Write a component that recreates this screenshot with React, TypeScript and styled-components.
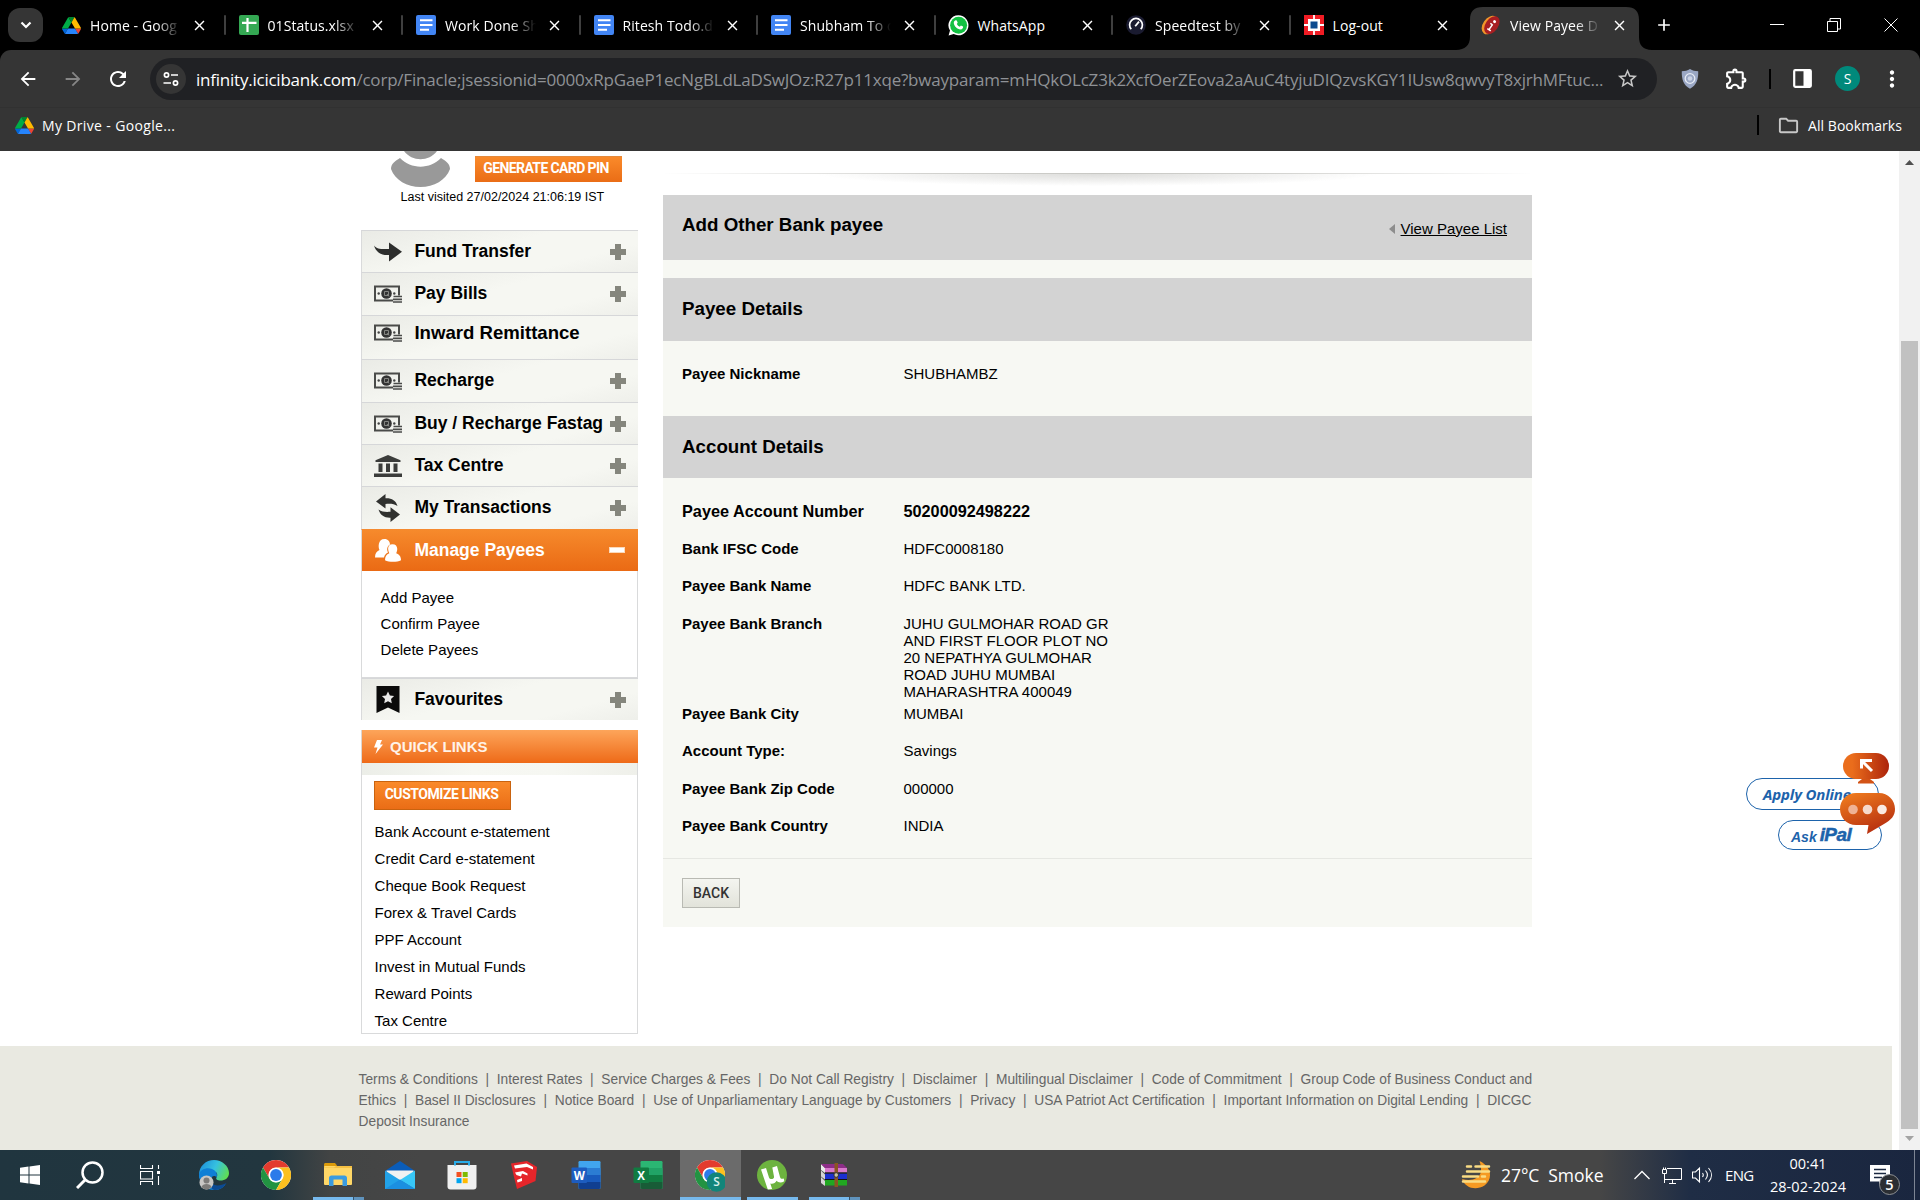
import React from 'react';
import styled, { createGlobalStyle, css } from 'styled-components';
import {
  MdArrowBack,
  MdArrowForward,
  MdRefresh,
  MdStarBorder,
  MdOutlineExtension,
  MdMoreVert,
  MdOutlineFolder,
  MdClose,
  MdAdd,
} from 'react-icons/md';

const uiFont = `"Open Sans", "Noto Sans", sans-serif`;
const pageFont = `"Liberation Sans", Arial, sans-serif`;

const GlobalStyle = createGlobalStyle`
  *, *::before, *::after { box-sizing: border-box; }
  body { margin: 0; background: #000; overflow: hidden; }
  svg { display: block; flex: none; }
`;

const Screen = styled.div`
  width: 1920px;
  height: 1200px;
  display: flex;
  flex-direction: column;
  overflow: hidden;
`;

const Spacer = styled.div<{ $width: number }>`
  width: ${(p) => p.$width}px;
  flex: none;
`;

/* ---------- browser tabs ---------- */

const TabStrip = styled.div`
  height: 50px;
  flex: none;
  display: flex;
  align-items: center;
  background: #000;
  font-family: ${uiFont};
  padding-left: 8px;
`;

const TabSearch = styled.div`
  width: 35px;
  height: 34px;
  border-radius: 12px;
  background: #353535;
  margin-right: 4px;
  display: flex;
  align-items: center;
  justify-content: center;
`;

const Tab = styled.div<{ $line?: boolean }>`
  position: relative;
  width: 177.5px;
  height: 50px;
  flex: none;
  display: flex;
  align-items: center;
  padding-left: 14px;
  color: #fff;
  ${(p) =>
    p.$line &&
    css`
      &::after {
        content: '';
        position: absolute;
        right: -1px;
        top: 15px;
        width: 2px;
        height: 20px;
        border-radius: 1px;
        background: #3f3f3f;
      }
    `}
`;

const ActiveShape = styled.svg`
  position: absolute;
  left: -11px;
  top: 7px;
`;

const Favicon = styled.div`
  position: relative;
  width: 20px;
  height: 20px;
  margin-right: 9px;
  display: flex;
  align-items: center;
  justify-content: center;
`;

const TabTitle = styled.div<{ $fade?: boolean }>`
  position: relative;
  width: 91px;
  font-size: 14px;
  line-height: 20px;
  padding-top: 1px;
  white-space: nowrap;
  letter-spacing: 0.08px;
  ${(p) =>
    p.$fade &&
    css`
      mask-image: linear-gradient(90deg, #000 66px, transparent 91px);
    `}
`;

const TabClose = styled.div`
  position: relative;
  margin-left: 10px;
  display: flex;
`;

const WindowControls = styled.div`
  margin-left: auto;
  margin-right: 22px;
  display: flex;
  gap: 43px;
`;

const NewTab = styled.div`
  width: 38px;
  display: flex;
  justify-content: center;
`;

/* ---------- toolbar ---------- */

const Toolbar = styled.div`
  height: 101px;
  flex: none;
  background: #353535;
  border-radius: 11px 11px 0 0;
  color: #fff;
  font-family: ${uiFont};
  display: flex;
  flex-direction: column;
`;

const NavRow = styled.div`
  height: 58px;
  display: flex;
  align-items: center;
  border-bottom: 1px solid #313131;
`;

const NavButton = styled.div<{ $dim?: boolean }>`
  width: 45px;
  display: flex;
  justify-content: center;
  color: ${(p) => (p.$dim ? '#868686' : '#fff')};
`;

const NavButtons = styled.div`
  display: flex;
  align-items: center;
  width: 150px;
  padding-left: 5px;
`;

const UrlBar = styled.div`
  width: 1507px;
  height: 42px;
  border-radius: 21px;
  background: #202124;
  display: flex;
  align-items: center;
  padding: 0 17px 0 6px;
`;

const SiteInfo = styled.div`
  width: 30px;
  height: 30px;
  border-radius: 50%;
  background: #353535;
  display: flex;
  align-items: center;
  justify-content: center;
  margin-right: 10px;
`;

const Url = styled.div`
  width: 1420px;
  white-space: nowrap;
  font-size: 17px;
  letter-spacing: -0.2px;
  padding-top: 2px;
  color: #8f9296;
`;

const Domain = styled.span`
  color: #fff;
  letter-spacing: -0.23px;
`;

const ToolIcons = styled.div`
  flex: 1;
  display: flex;
  align-items: center;
  padding-left: 24px;
`;

const Rule = styled.div<{ $height: number }>`
  width: 2px;
  height: ${(p) => p.$height}px;
  background: #000;
`;

const Profile = styled.div`
  width: 25px;
  height: 25px;
  border-radius: 50%;
  background: #00897b;
  font-size: 14px;
  line-height: 25px;
  text-align: center;
`;

const BookmarkRow = styled.div`
  flex: 1;
  display: flex;
  align-items: center;
  justify-content: space-between;
  padding: 0 18px 9px 15px;
  font-size: 14px;
`;

const Bookmark = styled.div<{ $spacing: number }>`
  display: flex;
  align-items: center;
  gap: 8px;
  letter-spacing: ${(p) => p.$spacing}px;
`;

/* ---------- page ---------- */

const Viewport = styled.div`
  height: 999px;
  flex: none;
  display: flex;
  background: #fff;
  font-family: ${pageFont};
  color: #000;
`;

const Page = styled.div`
  position: relative;
  width: 1899px;
  display: flex;
  flex-direction: column;
`;

const Body = styled.div`
  height: 895px;
  display: flex;
  padding-left: 361px;
`;

const Sidebar = styled.div`
  width: 277px;
  margin-right: 25px;
`;

const Visitor = styled.div`
  height: 79px;
  display: grid;
  grid-template-columns: 114px 147px;
  grid-template-rows: 37px 18px;
`;

const AvatarBox = styled.div`
  padding-left: 30px;
`;

const ButtonSlot = styled.div`
  padding-top: 5px;
`;

const OrangeButton = styled.div<{ $bordered?: boolean; $width: number; $height: number }>`
  width: ${(p) => p.$width}px;
  height: ${(p) => p.$height}px;
  display: flex;
  align-items: center;
  justify-content: center;
  background: linear-gradient(#fa8a2a, #ea6d16);
  border: ${(p) => (p.$bordered ? '1px solid #c9630f' : '0')};
  border-top: 1px solid ${(p) => (p.$bordered ? '#c9630f' : '#e58a3c')};
  padding: 0 ${(p) => (p.$bordered ? 2 : 5)}px 3px 0;
  color: #fff;
  font: 700 14px Roboto, sans-serif;
  letter-spacing: ${(p) => (p.$bordered ? -0.45 : -0.62)}px;
  white-space: nowrap;
`;

const LastVisit = styled.div`
  grid-column: 1 / 3;
  padding-left: 39.6px;
  font-size: 12.5px;
  line-height: 19px;
`;

const MenuRow = styled.div<{ $height: number; $lift?: number; $active?: boolean }>`
  height: ${(p) => p.$height}px;
  display: flex;
  align-items: center;
  padding: 0 12px ${(p) => p.$lift ?? 0}px 12px;
  border-left: 1px solid #d9dadb;
  border-top: 1px solid #d6d7d9;
  background: linear-gradient(165deg, #eaebe6 0%, #f6f7f2 45%, #f6f7f2 75%, #eeefea 100%);
  font-weight: 700;
  font-size: 17.5px;
  white-space: nowrap;
  ${(p) =>
    p.$active &&
    css`
      color: #fff;
      border-top-color: #f58a30;
      background: linear-gradient(#f68a2c, #ea6a14);
    `}
`;

const MenuIcon = styled.div`
  width: 28px;
  margin-right: 12.4px;
  display: flex;
  justify-content: center;
`;

const MenuLabel = styled.div<{ $size?: number }>`
  flex: 1;
  font-size: ${(p) => p.$size ?? 17.5}px;
`;

const Plus = styled.div`
  width: 16px;
  height: 16px;
  margin-top: 1px;
  background: linear-gradient(#85867d, #85867d) center / 16px 6px no-repeat,
    linear-gradient(#85867d, #85867d) center / 6px 16px no-repeat;
`;

const Minus = styled.div`
  width: 16px;
  height: 6px;
  margin-right: 1px;
  background: #fff;
  border: 1px solid #fbd9bb;
`;

const SubMenu = styled.div`
  height: 107px;
  border: 1px solid #d9dadb;
  border-top: 0;
  padding: 14px 0 0 18.6px;
  font-size: 15px;
  line-height: 26px;
`;

const QuickHead = styled.div`
  margin-top: 10px;
  height: 33px;
  border-left: 1px solid #dcd6d1;
  display: flex;
  align-items: center;
  gap: 7px;
  padding-left: 12px;
  background: linear-gradient(#fda55a, #ee6a18);
  color: #fff3e8;
  font-weight: 700;
  font-size: 15px;
`;

const QuickBox = styled.div`
  height: 271px;
  border: 1px solid #d9dadb;
  border-top: 0;
`;

const QuickBand = styled.div`
  height: 12px;
  background: linear-gradient(90deg, #eceee8, #f7f8f3 40%, #f6f7f2 70%, #eff0ea);
  margin-bottom: 6px;
`;

const QuickList = styled.div`
  padding-left: 12px;
`;

const QuickLinks = styled.div`
  margin-top: 8px;
  padding-left: 0.6px;
`;

const QuickLink = styled.div`
  font-size: 15px;
  line-height: 27px;
  white-space: nowrap;
`;

/* ---------- main panel ---------- */

const Main = styled.div`
  width: 869px;
`;

const HeaderShade = styled.div`
  margin-top: 22px;
  height: 22px;
  border-top: 1px solid transparent;
  border-image: linear-gradient(90deg, #fff, #d2d2cf 30%, #c8c8c4 50%, #d2d2cf 70%, #fff) 1;
  background: radial-gradient(ellipse 280px 12px at 50% 0, #dddddb, transparent);
`;

const TitleBar = styled.div<{ $height: number; $gap?: number }>`
  height: ${(p) => p.$height}px;
  margin-bottom: ${(p) => p.$gap ?? 0}px;
  background: #d3d3d3;
  display: flex;
  align-items: center;
  justify-content: space-between;
  padding: 0 25px 0 19px;
`;

const Heading = styled.div<{ $raise?: number }>`
  font-weight: 700;
  font-size: 18.75px;
  line-height: 22px;
  padding-bottom: ${(p) => p.$raise ?? 0}px;
`;

const BackLink = styled.div`
  display: flex;
  align-items: center;
  gap: 6px;
  font-size: 15px;
  line-height: 18px;
  padding-top: 2px;
  span {
    text-decoration: underline;
  }
`;

const Sheet = styled.div`
  background: #f7f8f3;
`;

const Fields = styled.div<{ $height: number; $top: number }>`
  height: ${(p) => p.$height}px;
  padding: ${(p) => p.$top}px 0 0 19px;
`;

const Field = styled.div<{ $height: number; $large?: boolean }>`
  height: ${(p) => p.$height}px;
  display: grid;
  grid-template-columns: 221.5px 220px;
  align-items: start;
  font-size: ${(p) => (p.$large ? 16.25 : 15)}px;
  font-weight: ${(p) => (p.$large ? 700 : 400)};
  line-height: 17px;
`;

const Label = styled.div`
  font-weight: 700;
  white-space: nowrap;
`;

const Value = styled.div`
  white-space: pre-line;
`;

const Actions = styled.div`
  height: 69px;
  border-top: 1px solid #e6e7e2;
  padding: 19px;
`;

const BackButton = styled.div`
  width: 58px;
  height: 30px;
  border: 1px solid #b9bab3;
  background: linear-gradient(#f4f5f0, #e2e3da);
  display: flex;
  align-items: center;
  justify-content: center;
  padding-bottom: 1px;
  font: 500 14px Roboto, sans-serif;
  letter-spacing: 0;
  color: #333;
`;

/* ---------- page footer, scrollbar, helper ---------- */

const Footer = styled.div`
  height: 104px;
  width: 1892px;
  background: #e9e9e1;
  padding: 23px 0 0 358.6px;
  font-size: 13.75px;
  line-height: 21px;
  color: #666;
`;

const FooterLine = styled.div`
  display: flex;
  white-space: nowrap;
`;

const FooterItem = styled.span`
  & + &::before {
    content: '|';
    margin: 0 7.7px;
  }
`;

const Scrollbar = styled.div`
  width: 21px;
  background: #f1f1f1;
  display: flex;
  flex-direction: column;
  align-items: center;
  padding: 9px 0;
`;

const Thumb = styled.div`
  width: 17px;
  height: 788px;
  margin: 176px 0 auto;
  background: #c1c1c1;
`;

const Helper = styled.div`
  position: absolute;
  left: 1746px;
  top: 602px;
  width: 150px;
  height: 98px;
`;

const Pill = styled.div<{ $left: number; $top: number; $width: number; $height: number }>`
  position: absolute;
  left: ${(p) => p.$left}px;
  top: ${(p) => p.$top}px;
  width: ${(p) => p.$width}px;
  height: ${(p) => p.$height}px;
  border: 1px solid #1d63ab;
  border-radius: 16px;
  background: #fff;
  color: #1d63ab;
  white-space: nowrap;
`;

const ApplyText = styled.div`
  padding: 1px 0 0 16px;
  font: italic 700 15px/28px "Open Sans", sans-serif;
  letter-spacing: -0.15px;
`;

const AskText = styled.div`
  padding-left: 12px;
  display: flex;
  gap: 3px;
  font: italic 700 14px/32px "Liberation Sans", sans-serif;
  b {
    font-size: 19px;
    line-height: 28px;
    letter-spacing: -0.6px;
    -webkit-text-stroke: 0.5px #1d63ab;
  }
`;

const HelperArt = styled.svg`
  position: absolute;
  left: 94px;
  top: 0;
`;

/* ---------- taskbar ---------- */

const Taskbar = styled.div`
  height: 50px;
  flex: none;
  display: flex;
  background: linear-gradient(90deg, #20353f 0, #22363f 270px, #424444 330px, #464646 420px, #464646 1600px, #1f2d45 1690px, #1a263f 1920px);
  color: #fff;
  font-family: ${uiFont};
`;

const SystemCell = styled.div`
  width: 60px;
  display: flex;
  align-items: center;
  justify-content: center;
`;

const Apps = styled.div`
  display: flex;
  padding-left: 3px;
  flex: 1;
`;

const AppCell = styled.div<{ $active?: boolean }>`
  position: relative;
  width: 62px;
  display: flex;
  align-items: center;
  justify-content: center;
  background: ${(p) => (p.$active ? 'linear-gradient(90deg, transparent 1px, #6b6b6b 1px)' : 'none')};
`;

const Underline = styled.div<{ $kind: 'one' | 'stack' | 'full' }>`
  position: absolute;
  bottom: 0;
  height: 3px;
  left: ${(p) => (p.$kind === 'full' ? 1 : 6)}px;
  right: ${(p) => (p.$kind === 'full' ? 0 : 5)}px;
  background: ${(p) =>
    p.$kind === 'stack'
      ? 'linear-gradient(90deg, #76b9ed 40px, #35536b 40px, #35536b 41px, #5f93bd 41px)'
      : '#76b9ed'};
`;

const Tray = styled.div`
  width: 459px;
  display: flex;
  align-items: center;
`;

const Weather = styled.div`
  width: 173px;
  display: flex;
  align-items: center;
  gap: 10px;
  font-size: 17.5px;
  letter-spacing: -0.05px;
  white-space: pre;
`;

const Language = styled.div`
  font-size: 15px;
  letter-spacing: -0.7px;
  margin-left: 12px;
  width: 40px;
`;

const Clock = styled.div`
  width: 86px;
  text-align: center;
  font-size: 14.5px;
  line-height: 23px;
  letter-spacing: 0.05px;
  padding-bottom: 1px;
`;

const Notice = styled.div`
  position: relative;
  margin-left: 19px;
  width: 45px;
  height: 50px;
  border-right: 1px solid #7d8594;
`;

const NoticeIcon = styled.svg`
  margin-top: 15px;
`;

const NoticeCount = styled.div`
  position: absolute;
  left: 9px;
  top: 24px;
  width: 21px;
  height: 21px;
  border-radius: 50%;
  border: 1px solid #8c8f93;
  background: #2b2e33;
  font-size: 14.5px;
  font-weight: 600;
  line-height: 19px;
  text-align: center;
`;

/* ---------- drawings ---------- */

const DriveLogo = () => (
  <svg width="19" height="17" viewBox="0 0 87.3 78">
    <path fill="#0066da" d="m6.6 66.85 3.85 6.65c.8 1.4 1.95 2.5 3.3 3.3l13.75-23.8h-27.5c0 1.55.4 3.1 1.2 4.5z" />
    <path fill="#00ac47" d="m43.65 25-13.75-23.8c-1.35.8-2.5 1.9-3.3 3.3l-25.4 44a9.06 9.06 0 0 0-1.2 4.5h27.5z" />
    <path fill="#ea4335" d="m73.55 76.8c1.35-.8 2.5-1.9 3.3-3.3l9.25-16c.8-1.4 1.2-2.95 1.2-4.5h-27.5l5.85 11.5z" />
    <path fill="#00832d" d="m43.65 25 13.75-23.8c-1.35-.8-2.9-1.2-4.5-1.2h-18.5c-1.6 0-3.15.45-4.5 1.2z" />
    <path fill="#2684fc" d="m59.8 53h-32.3l-13.75 23.8c1.35.8 2.9 1.2 4.5 1.2h50.8c1.6 0 3.15-.45 4.5-1.2z" />
    <path fill="#ffba00" d="m73.4 26.5-12.7-22c-.8-1.4-1.95-2.5-3.3-3.3l-13.75 23.8 16.15 28h27.45c0-1.55-.4-3.1-1.2-4.5z" />
  </svg>
);

const SheetIcon = () => (
  <svg width="20" height="20" viewBox="0 0 20 20">
    <rect width="20" height="20" rx="2" fill="#34a853" />
    <path d="M8.500 3v14M3 7.800h14.500" stroke="#fff" strokeWidth="2.200" />
  </svg>
);

const DocIcon = () => (
  <svg width="20" height="20" viewBox="0 0 20 20">
    <rect width="20" height="20" rx="2" fill="#4285f4" />
    <path d="M4 5.200h12.500M4 10h12.500M4 14.800h9" stroke="#fff" strokeWidth="2" />
  </svg>
);

const WhatsAppIcon = () => (
  <svg width="21" height="21" viewBox="0 0 21 21">
    <path d="M10.500.3a10 10 0 1 1-4.800 18.800L.6 20.500 2 15.600A10 10 0 0 1 10.500.3z" fill="#fff" />
    <circle cx="10.600" cy="10.300" r="8.500" fill="#12c142" />
    <path d="M7.500 5.300l1.300.2.9 2.200-.9 1.200c.7 1.300 1.700 2.200 3 2.800l1.100-1.200 2.200 1c.2 1.800-1 3-2.500 2.900-3.500-.3-6.500-3.300-6.800-6.500 0-1.100.7-2.200 1.700-2.600z" fill="#fff" />
  </svg>
);

const SpeedIcon = () => (
  <svg width="20" height="20" viewBox="0 0 20 20">
    <circle cx="10" cy="10" r="9.800" fill="#1a1b30" />
    <path d="M5.300 14.200a6.400 6.400 0 1 1 9.400 0" fill="none" stroke="#fff" strokeWidth="1.700" />
    <path d="M9.200 11.200L13 6.600" stroke="#fff" strokeWidth="1.800" />
  </svg>
);

const HdfcIcon = () => (
  <svg width="20" height="20" viewBox="0 0 20 20">
    <rect width="20" height="20" fill="#f01c24" />
    <path d="M10 0v20M0 10h20" stroke="#fff" strokeWidth="1.800" />
    <rect x="4" y="4" width="12" height="12" fill="#fff" />
    <rect x="6.500" y="6.500" width="7" height="7" fill="#0b4a8f" />
  </svg>
);

const IciciIcon = () => (
  <svg width="20" height="20" viewBox="0 0 20 20">
    <g transform="rotate(35 10 10)">
      <ellipse cx="9" cy="10.800" rx="6.800" ry="10.200" fill="#f0952a" />
      <ellipse cx="10.800" cy="9.600" rx="6.300" ry="10" fill="#a81e22" />
      <path d="M11 8.500v6.500M8.500 9H11M9 15h4.200" stroke="#fff" strokeWidth="1.500" />
      <circle cx="11" cy="5.200" r="1.500" fill="#fff" />
    </g>
  </svg>
);

const TuneIcon = () => (
  <svg width="18" height="18" viewBox="0 0 18 18" fill="none" stroke="#fff" strokeWidth="1.700">
    <circle cx="4.500" cy="5" r="2.100" />
    <path d="M9 5h7M1.500 13H9" />
    <circle cx="13.500" cy="13" r="2.100" />
  </svg>
);

const ShieldIcon = () => (
  <svg width="18" height="20" viewBox="0 0 18 20">
    <path d="M9 0c2.500 1.600 5 2.200 8.200 2.300.3 8-1.700 14-8.200 17.500C2.500 16.300.5 10.300.8 2.300 4 2.200 6.500 1.600 9 0z" fill="#9aa7c4" />
    <circle cx="9" cy="9.500" r="4.800" fill="none" stroke="#e6ebf5" strokeWidth="1.300" />
    <circle cx="9" cy="9.500" r="2.300" fill="#ccd4e6" />
  </svg>
);

const PanelIcon = () => (
  <svg width="19" height="19" viewBox="0 0 19 19">
    <rect x="1.200" y="1.200" width="16.600" height="16.600" rx="1" fill="none" stroke="#fff" strokeWidth="2.200" />
    <rect x="10.500" y="1" width="7.500" height="17" fill="#fff" />
  </svg>
);

const MoneyIcon = () => (
  <svg width="28" height="18" viewBox="0 0 28 18">
    <rect x="1" y="1.500" width="24" height="14" fill="none" stroke="#4a4b49" strokeWidth="2" />
    <circle cx="12.500" cy="8.500" r="5.300" fill="#333" />
    <path d="M10.500 6.500h4v4h-4zM13 9l2 2.500" stroke="#8c8d89" strokeWidth=".9" fill="none" />
    <circle cx="4.700" cy="8.500" r="1.200" fill="#444" />
    <circle cx="20.300" cy="8.500" r="1.200" fill="#444" />
    <path d="M19 10.500h9V18h-9z" fill="#f0f1ec" />
    <path d="M19.500 11.500H28M19 14.300h9M19 17h9" stroke="#4a4b49" strokeWidth="1.700" />
  </svg>
);

const ArrowIcon = () => (
  <svg width="28" height="20" viewBox="0 0 28 20">
    <path d="M0 3.500C3 7.500 8 7.200 15 7V.5L28 9.800 15 19.500V13C8 13.800 2 10.500 0 3.500z" fill="#2d2e2d" />
  </svg>
);

const BankIcon = () => (
  <svg width="28" height="22" viewBox="0 0 28 22" fill="#3b3c3a">
    <path d="M14 0l12.500 5.200V7h-25V5.200zM4.500 8.500h4V17h-4zM12 8.500h4V17h-4zM19.500 8.500h4V17h-4zM0 18.500h28V22H0z" />
  </svg>
);

const SwapIcon = () => (
  <svg width="26" height="28" viewBox="0 0 26 28" fill="#30312f">
    <path d="M1 7.500L10.500 0v4.300C16.500 4 21 6.500 22.500 12 19 9.700 15 9.500 10.500 10v4.500z" />
    <path d="M25 20.500L15.500 28v-4.300C9.500 24 5 21 3.500 15.500 7 18 11 18.200 15.500 17.800v-4.500z" />
  </svg>
);

const PeopleIcon = () => (
  <svg width="26" height="23" viewBox="0 0 26 23" fill="#fff">
    <path d="M9.500 0C13 0 15 2.500 15 5.500c-3 1.500-3.500 5-2 8-2 1-3.500 2.500-4 5H0c0-4 1.500-6 4.500-7.500C3 8 3 0 9.500 0z" />
    <path d="M17.500 5.200c4.500 0 6 4.300 3.700 9 3 1.200 4.800 3 4.800 7-4 2-12 2-16 0 0-4 1.500-5.800 4.300-7-2.300-4.700-1.300-9 3.200-9z" />
  </svg>
);

const FavIcon = () => (
  <svg width="24" height="27" viewBox="0 0 24 27">
    <path d="M.5 0h23v27L12 21.500.5 27z" fill="#0b0b0b" />
    <path d="M12 5.500l1.900 3.900 4.200.6-3.100 3 .8 4.200-3.800-2-3.800 2 .8-4.200-3.100-3 4.200-.6z" fill="#e9e9e9" />
  </svg>
);

const BoltIcon = () => (
  <svg width="9" height="14" viewBox="0 0 9 14">
    <path d="M3 0h5L6 4.500h3L1.500 14 3.500 7.500H0z" fill="#fff" />
  </svg>
);

const ChromeLogo = ({ badge }: { badge?: boolean }) => (
  <svg width="30" height="34" viewBox="0 0 30 34">
    <g transform="translate(0 2)">
      <circle cx="15" cy="15" r="15" fill="#fff" />
      <path d="M2 7.500A15 15 0 0 1 28 7.500H15a7.500 7.500 0 0 0-6.500 11.200z" fill="#e33b2e" />
      <path d="M2 7.500A15 15 0 0 0 15 30l6.500-11.200a7.500 7.500 0 0 1-13 0z" fill="#229342" />
      <path d="M28 7.500A15 15 0 0 1 15 30l6.500-11.200A7.500 7.500 0 0 0 15 7.500z" fill="#fcc01f" />
      <circle cx="15" cy="15" r="7.300" fill="#fff" />
      <circle cx="15" cy="15" r="5.900" fill="#2c7bea" />
    </g>
    {badge && <circle cx="21.500" cy="24" r="9.800" fill="#12857a" />}
    {badge && (
      <text x="21.500" y="28.300" fill="#d6f0ec" fontSize="12" fontFamily="Open Sans" fontWeight="600" textAnchor="middle">
        S
      </text>
    )}
  </svg>
);

const EdgeLogo = () => (
  <svg width="30" height="30" viewBox="0 0 30 30">
    <defs>
      <linearGradient id="edgeTop" x1="0" x2="1" y1="0.200" y2="0.600">
        <stop offset="0" stopColor="#1c8fdc" />
        <stop offset=".5" stopColor="#36c1e0" />
        <stop offset="1" stopColor="#62e04a" />
      </linearGradient>
    </defs>
    <path d="M0 15C0 6 7 0 15 0s15 6 15 13c0 5-4 7.500-8.500 7.500-3 0-5-1-4-3 1.500-2 1-6-3-6C8 11.500 5 17 6 24 2 21.500 0 18.500 0 15z" fill="url(#edgeTop)" />
    <path d="M0 14c2-5 8-7 13-5 4 1.500 6 5 4.500 8.500-2-3-6-1-5.500 3.500.5 5 7 6.500 14.500 3.500C23 29 19 30 15 30 7 30 0 24 0 14z" fill="#0f7fd6" />
    <path d="M12 21c1 5 8 6 15.500 2C24 29 19 30 15 30c-4-2-5-6-3-9z" fill="#0c4a92" />
    <circle cx="7.500" cy="22.500" r="7" fill="#c9c7c5" />
    <circle cx="7.500" cy="20.500" r="3" fill="#7d7b79" />
    <path d="M2.500 27c1-4 9-4 10 0-2.500 3.300-7.500 3.300-10 0z" fill="#7d7b79" />
  </svg>
);

const ExplorerLogo = () => (
  <svg width="28" height="24" viewBox="0 0 28 24">
    <path d="M0 1.500C0 .7.500 0 1.500 0H11l2 2.500V6H0z" fill="#dc9b0b" />
    <rect x="0" y="3" width="28" height="19" rx="1" fill="#ffd767" />
    <path d="M0 4.500h10l2-1.500h16v2H0z" fill="#f5c042" />
    <path d="M5 23v-8c0-1.500 1-2.500 2.500-2.500h13c1.500 0 2.500 1 2.500 2.500v8h-4.500v-6.500h-9V23z" fill="#3a9be0" />
  </svg>
);

const MailLogo = () => (
  <svg width="30" height="28" viewBox="0 0 30 28">
    <path d="M0 10L15 0l15 10z" fill="#0a5cb8" />
    <path d="M1.500 9.500h27V20h-27z" fill="#f2f2f2" />
    <path d="M0 9.500L15 19 30 28H0z" fill="#22a2e8" />
    <path d="M30 9.500L15 19l15 9z" fill="#38c7f7" />
    <path d="M0 28l15-9.500L30 28z" fill="#1b8fe0" />
  </svg>
);

const StoreLogo = () => (
  <svg width="30" height="30" viewBox="0 0 30 30">
    <path d="M.5 5h29v21.500c0 2-1 3-3 3h-23c-2 0-3-1-3-3z" fill="#f0f0f0" />
    <path d="M8 5.500V2h14v3.500" fill="none" stroke="#29abe8" strokeWidth="2" />
    <path d="M9.500 12h5v5h-5z" fill="#f25022" />
    <path d="M15.700 12h5v5h-5z" fill="#7fba00" />
    <path d="M9.500 18.200h5v5h-5z" fill="#00a4ef" />
    <path d="M15.700 18.200h5v5h-5z" fill="#ffb900" />
  </svg>
);

const SketchUpLogo = () => (
  <svg width="26" height="28" viewBox="0 0 26 28">
    <path d="M0 2.500L16 0l10 6-1.500 14L6 28 3 16z" fill="#e5252a" />
    <path d="M3 4.500L15.500 2.500 22 6v2.500l-6-2.500-12 1.500zM4 11.500l8-1.500 4.500 2.500v2L11 12.500l-1 3-4.500-1.500zM6 19l5-2v3l-4.500 1.500z" fill="#fff" />
  </svg>
);

const OfficeLogo = ({ letter, tones, tile }: { letter: string; tones: string[]; tile: string }) => (
  <svg width="30" height="28" viewBox="0 0 30 28">
    <rect x="7.500" y="0" width="22" height="28" rx="1.200" fill={tones[0]} />
    <rect x="7.500" y="7" width="22" height="7" fill={tones[1]} />
    <rect x="7.500" y="14" width="22" height="7" fill={tones[2]} />
    <path d="M7.500 21h22v6l-1 1h-20l-1-1z" fill={tones[3]} />
    <rect x="0.500" y="6.500" width="15.500" height="15.500" rx="1" fill={tile} />
    <text x="8.200" y="18.500" fill="#fff" fontSize="11.500" fontFamily="Open Sans" fontWeight="700" textAnchor="middle">
      {letter}
    </text>
  </svg>
);

const TorrentLogo = () => (
  <svg width="30" height="30" viewBox="0 0 30 30">
    <circle cx="15" cy="15" r="15" fill="#6db33f" />
    <path d="M4 9.500L9 8l3 9.500c.8 2.500 5.500 2 5-1L15.300 7.500 20 6l3 11c.5 1.800 1.800 2.200 3.800 1.600l.5 2.600c-3 1.800-6 1.600-7.700-.4-1.300 2.500-3.700 3.400-6.300 2.800l1.800 5.400-4.300.6z" fill="#fff" />
  </svg>
);

const RarLogo = () => (
  <svg width="28" height="24" viewBox="0 0 28 24">
    <path d="M1 1l4 4v5l-4-3z" fill="#e9e9e9" />
    <path d="M1 7.500l4 4v5l-4-3zM1 14l4 4v5l-4-3z" fill="#d4d4d4" />
    <path d="M1 1h22l4 4H5z" fill="#8d2d88" />
    <path d="M5 5h22v4.500H5z" fill="#d878cc" />
    <path d="M5 10.500h22v5.500H5z" fill="#1b2fd0" />
    <path d="M5 17h22v5.500H5z" fill="#21a821" />
    <path d="M5 9.500h22v1H5zM5 16h22v1H5z" fill="#111" />
    <path d="M14.500 0h3.500v24h-3.500z" fill="#8a5522" />
    <circle cx="16.200" cy="12" r="2.300" fill="#c9c2a2" stroke="#333" />
  </svg>
);

const WeatherIcon = () => (
  <svg width="30" height="28" viewBox="0 0 30 28">
    <path d="M18.500 0C31 6 32 18 23.500 24.500 15 30 4 27 1 18c8 2.500 18 .5 19-8 .2-3.500-.5-7-1.500-10z" fill="#f59a23" />
    <path d="M6 5.500h4M14.500 5.500H28M6 10.500h22M2 15.500h15M21 15.500h3M2 20.500h22" stroke="#f9dc84" strokeWidth="2.500" strokeLinecap="round" />
  </svg>
);

/* ---------- data ---------- */

type TabInfo = { title: string; icon: React.ReactNode; fade?: boolean; active?: boolean };

const tabs: TabInfo[] = [
  { title: 'Home - Goog', icon: <DriveLogo />, fade: true },
  { title: '01Status.xlsx -', icon: <SheetIcon />, fade: true },
  { title: 'Work Done Sh', icon: <DocIcon />, fade: true },
  { title: 'Ritesh Todo.d', icon: <DocIcon />, fade: true },
  { title: 'Shubham To d', icon: <DocIcon />, fade: true },
  { title: 'WhatsApp', icon: <WhatsAppIcon /> },
  { title: 'Speedtest by', icon: <SpeedIcon />, fade: true },
  { title: 'Log-out', icon: <HdfcIcon /> },
  { title: 'View Payee D', icon: <IciciIcon />, fade: true, active: true },
];

type Item = {
  label: string;
  height: number;
  icon: React.ReactNode;
  lift?: number;
  size?: number;
  mark?: 'plus' | 'minus';
};

const menuTop: Item[] = [
  { label: 'Fund Transfer', height: 42, icon: <ArrowIcon />, mark: 'plus' },
  { label: 'Pay Bills', height: 43, lift: 1, icon: <MoneyIcon />, mark: 'plus' },
  { label: 'Inward Remittance', height: 44, icon: <MoneyIcon />, lift: 10, size: 18.6 },
  { label: 'Recharge', height: 43, lift: 1, icon: <MoneyIcon />, mark: 'plus' },
  { label: 'Buy / Recharge Fastag', height: 42, icon: <MoneyIcon />, mark: 'plus' },
  { label: 'Tax Centre', height: 42, icon: <BankIcon />, mark: 'plus' },
  { label: 'My Transactions', height: 43, lift: 1, icon: <SwapIcon />, mark: 'plus' },
  { label: 'Manage Payees', height: 42, lift: 1, icon: <PeopleIcon />, mark: 'minus' },
];

const quickLinks = [
  'Bank Account e-statement',
  'Credit Card e-statement',
  'Cheque Book Request',
  'Forex & Travel Cards',
  'PPF Account',
  'Invest in Mutual Funds',
  'Reward Points',
  'Tax Centre',
];

const accountFields = [
  { label: 'Payee Account Number', value: '50200092498222', height: 37, large: true },
  { label: 'Bank IFSC Code', value: 'HDFC0008180', height: 37 },
  { label: 'Payee Bank Name', value: 'HDFC BANK LTD.', height: 38 },
  {
    label: 'Payee Bank Branch',
    value: 'JUHU GULMOHAR ROAD GR\nAND FIRST FLOOR PLOT NO\n20 NEPATHYA GULMOHAR\nROAD JUHU MUMBAI\nMAHARASHTRA 400049',
    height: 90,
  },
  { label: 'Payee Bank City', value: 'MUMBAI', height: 37 },
  { label: 'Account Type:', value: 'Savings', height: 38 },
  { label: 'Payee Bank Zip Code', value: '000000', height: 37 },
  { label: 'Payee Bank Country', value: 'INDIA', height: 20 },
];

const footerLines = [
  [
    'Terms & Conditions',
    'Interest Rates',
    'Service Charges & Fees',
    'Do Not Call Registry',
    'Disclaimer',
    'Multilingual Disclaimer',
    'Code of Commitment',
    'Group Code of Business Conduct and',
  ],
  [
    'Ethics',
    'Basel II Disclosures',
    'Notice Board',
    'Use of Unparliamentary Language by Customers',
    'Privacy',
    'USA Patriot Act Certification',
    'Important Information on Digital Lending',
    'DICGC',
  ],
  ['Deposit Insurance'],
];

const MenuEntry = ({ item }: { item: Item }) => (
  <MenuRow $height={item.height} $lift={item.lift} $active={item.mark === 'minus'}>
    <MenuIcon>{item.icon}</MenuIcon>
    <MenuLabel $size={item.size}>{item.label}</MenuLabel>
    {item.mark === 'plus' && <Plus />}
    {item.mark === 'minus' && <Minus />}
  </MenuRow>
);

export default function App() {
  return (
    <Screen>
      <GlobalStyle />
      <TabStrip>
        <TabSearch>
          <svg width="12" height="8" viewBox="0 0 12 8">
            <path d="M1.500 1.500L6 6l4.500-4.500" fill="none" stroke="#fff" strokeWidth="2.200" />
          </svg>
        </TabSearch>
        {tabs.map((t, i) => (
          <Tab key={t.title} $line={i < 7}>
            {t.active && (
              <ActiveShape width="196" height="43" viewBox="0 0 196 43">
                <path d="M0 43c9 0 14-5 14-13V13C14 4 18 0 27 0h143c9 0 13 4 13 13v17c0 8 4 13 13 13z" fill="#353535" />
              </ActiveShape>
            )}
            <Favicon>{t.icon}</Favicon>
            <TabTitle $fade={t.fade}>{t.title}</TabTitle>
            <TabClose>
              <MdClose size={17} />
            </TabClose>
          </Tab>
        ))}
        <NewTab>
          <MdAdd size={20} color="#fff" />
        </NewTab>
        <WindowControls>
          <svg width="14" height="14" viewBox="0 0 14 14">
            <path d="M0 6.500h14" stroke="#fff" />
          </svg>
          <svg width="14" height="14" viewBox="0 0 14 14" fill="none" stroke="#fff">
            <path d="M.5 3.500h10v10H.500zM3 3.500V.500h10.500V11h-3" />
          </svg>
          <svg width="14" height="14" viewBox="0 0 14 14" stroke="#fff">
            <path d="M.5.500l13 13M13.500.500l-13 13" />
          </svg>
        </WindowControls>
      </TabStrip>

      <Toolbar>
        <NavRow>
          <NavButtons>
            <NavButton>
              <MdArrowBack size={22} />
            </NavButton>
            <NavButton $dim>
              <MdArrowForward size={22} />
            </NavButton>
            <NavButton>
              <MdRefresh size={24} />
            </NavButton>
          </NavButtons>
          <UrlBar>
            <SiteInfo>
              <TuneIcon />
            </SiteInfo>
            <Url>
              <Domain>infinity.icicibank.com</Domain>
              /corp/Finacle;jsessionid=0000xRpGaeP1ecNgBLdLaDSwJOz:R27p11xqe?bwayparam=mHQkOLcZ3k2XcfOerZEova2aAuC4tyjuDIQzvsKGY1IUsw8qwvyT8xjrhMFtuc...
            </Url>
            <MdStarBorder size={23} color="#c7c7c7" />
          </UrlBar>
          <ToolIcons>
            <ShieldIcon />
            <Spacer $width={25} />
            <MdOutlineExtension size={25} />
            <Spacer $width={20} />
            <Rule $height={20} />
            <Spacer $width={22} />
            <PanelIcon />
            <Spacer $width={23} />
            <Profile>S</Profile>
            <Spacer $width={19} />
            <MdMoreVert size={26} />
          </ToolIcons>
        </NavRow>
        <BookmarkRow>
          <Bookmark $spacing={0.35}>
            <DriveLogo />
            My Drive - Google...
          </Bookmark>
          <Bookmark $spacing={0.05}>
            <Rule $height={20} />
            <Spacer $width={2} />
            <MdOutlineFolder size={23} color="#c7c7c7" />
            All Bookmarks
          </Bookmark>
        </BookmarkRow>
      </Toolbar>

      <Viewport>
        <Page>
          <Body>
            <Sidebar>
              <Visitor>
                <AvatarBox>
                  <svg width="59" height="36" viewBox="0 0 59 36" fill="#999">
                    <path d="M13 0h33c-8 11-25 11-33 0z" />
                    <path d="M9 7c11 11.500 30 11.500 41 0 5 3 9 6 9 11-4 11-16 18-29.500 18S4 29 0 18C0 13 4 10 9 7z" />
                  </svg>
                </AvatarBox>
                <ButtonSlot>
                  <OrangeButton $width={147} $height={26}>
                    GENERATE CARD PIN
                  </OrangeButton>
                </ButtonSlot>
                <LastVisit>Last visited 27/02/2024 21:06:19 IST</LastVisit>
              </Visitor>
              {menuTop.map((m) => (
                <MenuEntry key={m.label} item={m} />
              ))}
              <SubMenu>
                <div>Add Payee</div>
                <div>Confirm Payee</div>
                <div>Delete Payees</div>
              </SubMenu>
              <MenuEntry item={{ label: 'Favourites', height: 42, icon: <FavIcon />, mark: 'plus' }} />
              <QuickHead>
                <BoltIcon />
                QUICK LINKS
              </QuickHead>
              <QuickBox>
                <QuickBand />
                <QuickList>
                  <OrangeButton $bordered $width={137} $height={29}>
                    CUSTOMIZE LINKS
                  </OrangeButton>
                  <QuickLinks>
                    {quickLinks.map((l) => (
                      <QuickLink key={l}>{l}</QuickLink>
                    ))}
                  </QuickLinks>
                </QuickList>
              </QuickBox>
            </Sidebar>

            <Main>
              <HeaderShade />
              <Sheet>
                <TitleBar $height={65} $gap={18}>
                  <Heading $raise={5}>Add Other Bank payee</Heading>
                  <BackLink>
                    <svg width="6" height="10" viewBox="0 0 6 10">
                      <path d="M6 0v10L0 5z" fill="#8d8d8d" />
                    </svg>
                    <span>View Payee List</span>
                  </BackLink>
                </TitleBar>
                <TitleBar $height={63}>
                  <Heading $raise={1}>Payee Details</Heading>
                </TitleBar>
                <Fields $height={75} $top={24}>
                  <Field $height={17}>
                    <Label>Payee Nickname</Label>
                    <Value>SHUBHAMBZ</Value>
                  </Field>
                </Fields>
                <TitleBar $height={62}>
                  <Heading>Account Details</Heading>
                </TitleBar>
                <Fields $height={380} $top={25}>
                  {accountFields.map((f) => (
                    <Field key={f.label} $height={f.height} $large={f.large}>
                      <Label>{f.label}</Label>
                      <Value>{f.value}</Value>
                    </Field>
                  ))}
                </Fields>
                <Actions>
                  <BackButton>BACK</BackButton>
                </Actions>
              </Sheet>
            </Main>
          </Body>
          <Footer>
            {footerLines.map((line) => (
              <FooterLine key={line[0]}>
                {line.map((it) => (
                  <FooterItem key={it}>{it}</FooterItem>
                ))}
              </FooterLine>
            ))}
          </Footer>

          <Helper>
            <Pill $left={0} $top={25} $width={133} $height={32}>
              <ApplyText>Apply Online</ApplyText>
            </Pill>
            <Pill $left={32} $top={67} $width={104} $height={30}>
              <AskText>
                <span>Ask</span>
                <b>iPal</b>
              </AskText>
            </Pill>
            <HelperArt width="56" height="84" viewBox="0 0 56 84">
              <defs>
                <linearGradient id="screenFill">
                  <stop offset="0.200" stopColor="#ea6d1c" />
                  <stop offset="1" stopColor="#ad240b" />
                </linearGradient>
                <linearGradient id="bubbleFill" x1="0.200" y1="0" x2="0.700" y2="1">
                  <stop offset="0" stopColor="#ee7a1e" />
                  <stop offset="1" stopColor="#b32a0e" />
                </linearGradient>
              </defs>
              <rect x="3" y="0" width="46" height="26" rx="13" fill="url(#screenFill)" />
              <path d="M22 26h8l4 3v1.500H18V29z" fill="#d35316" />
              <path d="M21.500 15.500V7.500h10.500M22.500 8.500l9.500 9.500" fill="none" stroke="#fff" strokeWidth="3" />
              <path d="M16 40h23c9 0 16 7 16 16 0 7-4 11-11 15L27 81l1.500-9H16C7 72 0 65 0 56s7-16 16-16z" fill="url(#bubbleFill)" />
              <circle cx="13" cy="56.500" r="4.800" fill="#efb294" />
              <circle cx="27.500" cy="56.500" r="4.800" fill="#f6d9cb" />
              <circle cx="42" cy="56.500" r="4.800" fill="#faeae3" />
            </HelperArt>
          </Helper>
        </Page>
        <Scrollbar>
          <svg width="9" height="5" viewBox="0 0 9 5">
            <path d="M0 5L4.500 0 9 5z" fill="#505050" />
          </svg>
          <Thumb />
          <svg width="9" height="5" viewBox="0 0 9 5">
            <path d="M0 0l4.500 5L9 0z" fill="#a3a3a3" />
          </svg>
        </Scrollbar>
      </Viewport>

      <Taskbar>
        <SystemCell>
          <svg width="20" height="20" viewBox="0 0 20 20" fill="#fff">
            <path d="M0 2.800l8.500-1.200v7.900H0zM9.500 1.400L20 0v9.500H9.500zM0 10.500h8.500v7.900L0 17.200zM9.500 10.500H20V20L9.500 18.600z" />
          </svg>
        </SystemCell>
        <SystemCell>
          <svg width="28" height="28" viewBox="0 0 28 28" fill="none" stroke="#fff">
            <circle cx="16.500" cy="11.500" r="10" strokeWidth="2.500" />
            <path d="M9.500 18.500L1 27" strokeWidth="3" />
          </svg>
        </SystemCell>
        <SystemCell>
          <svg width="20" height="20" viewBox="0 0 20 20" fill="none" stroke="#fff">
            <path d="M.5 0v3.500h12V0M.5 20v-3.500h12V20M.5 6.500h12v7.500H.500zM18.500 0v4M18.500 11v9" strokeWidth="1.100" />
            <path d="M17 6h3v3h-3z" fill="#fff" stroke="none" />
          </svg>
        </SystemCell>
        <Apps>
          <AppCell>
            <EdgeLogo />
          </AppCell>
          <AppCell>
            <ChromeLogo />
          </AppCell>
          <AppCell>
            <ExplorerLogo />
            <Underline $kind="stack" />
          </AppCell>
          <AppCell>
            <MailLogo />
          </AppCell>
          <AppCell>
            <StoreLogo />
          </AppCell>
          <AppCell>
            <SketchUpLogo />
          </AppCell>
          <AppCell>
            <OfficeLogo letter="W" tones={['#41a5ee', '#2b7cd3', '#185abd', '#103f91']} tile="#1d5cbf" />
          </AppCell>
          <AppCell>
            <OfficeLogo letter="X" tones={['#2bb673', '#21a366', '#107c41', '#185c37']} tile="#107c41" />
          </AppCell>
          <AppCell $active>
            <ChromeLogo badge />
            <Underline $kind="full" />
          </AppCell>
          <AppCell>
            <TorrentLogo />
            <Underline $kind="one" />
          </AppCell>
          <AppCell>
            <RarLogo />
            <Underline $kind="stack" />
          </AppCell>
        </Apps>
        <Tray>
          <Weather>
            <WeatherIcon />
            27°C  Smoke
          </Weather>
          <svg width="16" height="10" viewBox="0 0 16 10" fill="none" stroke="#fff" strokeWidth="1.300">
            <path d="M.5 9L8 1.500 15.500 9" />
          </svg>
          <Spacer $width={12} />
          <svg width="20" height="17" viewBox="0 0 20 17" fill="none" stroke="#fff">
            <path d="M5 1.500h14.500v11H2.500V7M7 16.500h7M10.500 12.500v4M.5 2.500h4v4h-4zM1.500.500v2M3.500.500v2M2.500 7v9" />
          </svg>
          <Spacer $width={10} />
          <svg width="21" height="18" viewBox="0 0 21 18" fill="none" stroke="#fff">
            <path d="M.5 6v6h3l4 4V2l-4 4zM10.500 7c1 1.300 1 2.700 0 4M13.500 4.500c2.300 2.700 2.300 6.300 0 9M16.500 2c4 4.300 4 9.700 0 14" strokeWidth="1.100" />
          </svg>
          <Language>ENG</Language>
          <Clock>
            <div>00:41</div>
            <div>28-02-2024</div>
          </Clock>
          <Notice>
            <NoticeIcon width="20" height="20" viewBox="0 0 20 20">
              <path d="M0 0h20v16.500h-7L9 20v-3.500H0z" fill="#fff" />
              <path d="M4 4.500h12M4 8.500h12M4 12.500h8" stroke="#1b2840" strokeWidth="1.300" />
            </NoticeIcon>
            <NoticeCount>5</NoticeCount>
          </Notice>
        </Tray>
      </Taskbar>
    </Screen>
  );
}
